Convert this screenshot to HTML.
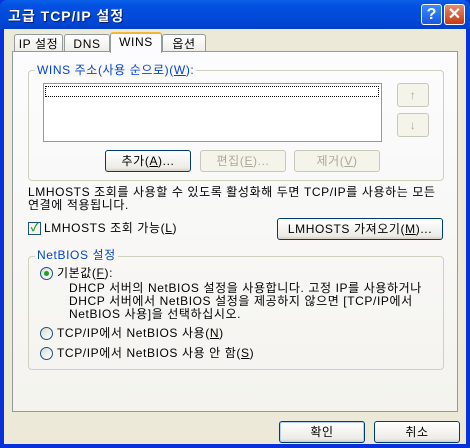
<!DOCTYPE html>
<html><head><meta charset="utf-8"><style>
*{margin:0;padding:0;box-sizing:border-box}
body{width:470px;height:448px;overflow:hidden;background:#0831d9;font-family:"Liberation Sans","Noto Sans CJK KR","NanumGothic",sans-serif;font-size:12px;color:#000;position:relative;letter-spacing:0.6px}
.a{position:absolute}
#title{left:0;top:0;width:470px;height:29px;background:linear-gradient(#0a5fe8,#0350e0 20%,#0048d8 70%,#0040c8);border-radius:7px 7px 0 0}
#client{left:4px;top:29px;width:462px;height:415px;background:#ece9d8}
.tb{width:21px;height:21px;border:1px solid #fff;border-radius:3px;color:#fff;font-weight:bold;text-align:center;line-height:19px;font-size:16px;letter-spacing:0}
.tab{height:19px;border:1px solid #919b9c;border-bottom:none;border-radius:3px 3px 0 0;background:linear-gradient(#fff,#ecebe5);text-align:center;line-height:18px;font-size:12px}
#panel{left:12px;top:51px;width:446px;height:361px;border:1px solid #919b9c;background:linear-gradient(#fcfcfe,#f4f3ee)}
.grp{border:1px solid #d0d0bf;border-radius:4px}
.gl{color:#0046d5;background:#f9f8f4;padding:0 2px;font-size:12px;line-height:13px}
.btn{height:22px;border:1px solid #003c74;border-radius:3px;background:linear-gradient(#fff,#ecebe6 85%,#d6d0c5);text-align:center;line-height:20px;font-size:12px}
.dis{border-color:#c9c7ba;color:#aca899;background:#f5f4ea}
.rad{width:13px;height:13px;border:1px solid #1c5180;border-radius:50%;background:linear-gradient(135deg,#dcdcd5,#fff)}
.t{font-size:12px;line-height:13px;white-space:nowrap}
</style></head><body>
<div id="title" class="a"></div>
<div class="a" style="left:8px;top:6px;color:#fff;font-weight:bold;font-size:14px;letter-spacing:1px;text-shadow:1px 1px #0a1e6e">고급 TCP/IP 설정</div>
<div class="a tb" style="left:421px;top:4px;background:linear-gradient(#3c8cf8,#1856e0)">?</div>
<div class="a tb" style="left:444px;top:4px;background:linear-gradient(#e88a6a,#c43a14)">✕</div>
<div id="client" class="a"></div>
<div class="a tab" style="left:14px;top:34px;width:49px">IP 설정</div>
<div class="a tab" style="left:64px;top:34px;width:46px">DNS</div>
<div class="a tab" style="left:162px;top:34px;width:44px">옵션</div>
<div id="panel" class="a"></div>
<div class="a tab" style="left:110px;top:32px;width:52px;height:21px;background:#fcfcfe;border-top:2px solid #f5b53b;line-height:17px">WINS</div>
<div class="a grp" style="left:28px;top:70px;width:416px;height:111px"></div>
<div class="a gl" style="left:35px;top:64px">WINS 주소(사용 순으로)(<u>W</u>):</div>
<div class="a" style="left:43px;top:83px;width:339px;height:59px;border:1px solid #7f9db9;background:#fff"></div>
<div class="a" style="left:45px;top:86px;width:334px;height:11px;border:1px dotted #000"></div>
<div class="a btn dis" style="left:397px;top:83px;width:32px;height:24px;color:#aca899;font-weight:bold;line-height:22px">↑</div>
<div class="a btn dis" style="left:397px;top:113px;width:32px;height:24px;color:#aca899;font-weight:bold;line-height:22px">↓</div>
<div class="a btn" style="left:105px;top:150px;width:86px">추가(<u>A</u>)...</div>
<div class="a btn dis" style="left:200px;top:150px;width:86px">편집(<u>E</u>)...</div>
<div class="a btn dis" style="left:294px;top:150px;width:86px">제거(<u>V</u>)</div>
<div class="a t" style="left:28px;top:186px">LMHOSTS 조회를 사용할 수 있도록 활성화해 두면 TCP/IP를 사용하는 모든<br>연결에 적용됩니다.</div>
<div class="a" style="left:28px;top:222px;width:13px;height:13px;border:1px solid #1c5180;background:#f4f4f0;color:#21a121;font-size:11px;line-height:11px;text-align:center;font-weight:bold;letter-spacing:0">✓</div>
<div class="a t" style="left:44px;top:222px">LMHOSTS 조회 가능(<u>L</u>)</div>
<div class="a btn" style="left:277px;top:218px;width:166px">LMHOSTS 가져오기(<u>M</u>)...</div>
<div class="a grp" style="left:28px;top:256px;width:416px;height:114px"></div>
<div class="a gl" style="left:35px;top:249px">NetBIOS 설정</div>
<div class="a rad" style="left:40px;top:267px"><div class="a" style="left:3px;top:3px;width:5px;height:5px;border-radius:50%;background:#21a121"></div></div>
<div class="a t" style="left:57px;top:267px">기본값(<u>F</u>):</div>
<div class="a t" style="left:69px;top:282px;line-height:13px">DHCP 서버의 NetBIOS 설정을 사용합니다. 고정 IP를 사용하거나<br>DHCP 서버에서 NetBIOS 설정을 제공하지 않으면 [TCP/IP에서<br>NetBIOS 사용]을 선택하십시오.</div>
<div class="a rad" style="left:40px;top:327px"></div>
<div class="a t" style="left:57px;top:327px">TCP/IP에서 NetBIOS 사용(<u>N</u>)</div>
<div class="a rad" style="left:40px;top:347px"></div>
<div class="a t" style="left:57px;top:347px">TCP/IP에서 NetBIOS 사용 안 함(<u>S</u>)</div>
<div class="a btn" style="left:279px;top:421px;width:86px;box-shadow:inset 0 0 0 1px #b8d0f8">확인</div>
<div class="a btn" style="left:374px;top:421px;width:86px">취소</div>
</body></html>
